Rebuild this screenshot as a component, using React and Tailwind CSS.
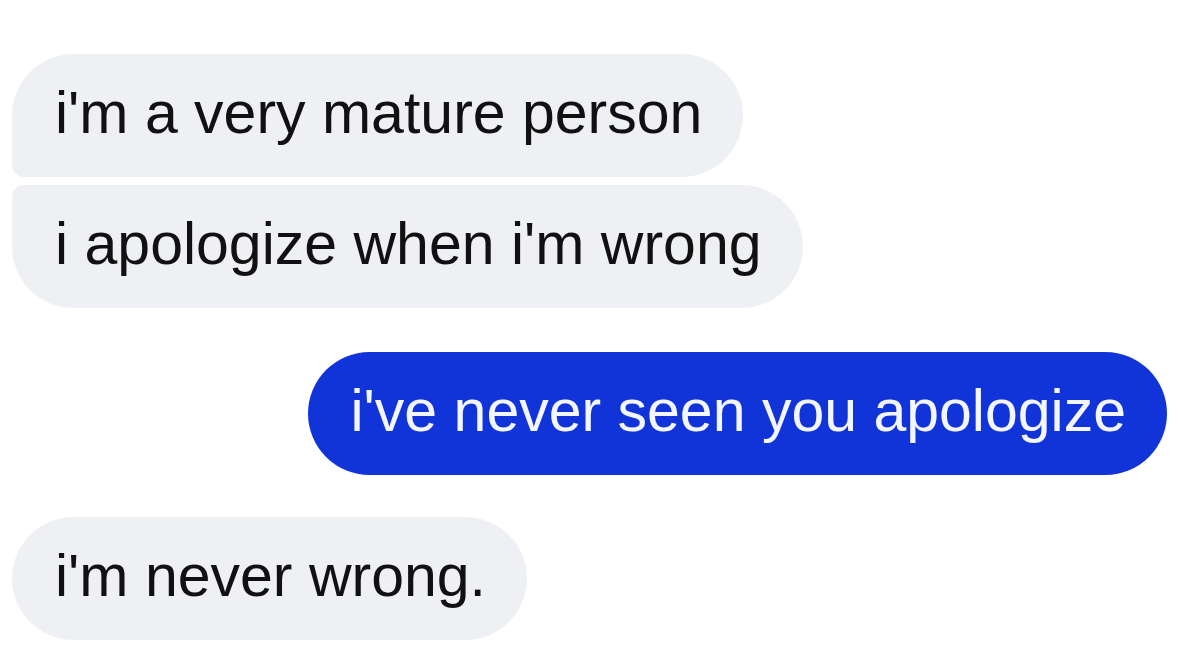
import React from "react";

const font = { fontFamily: '"Liberation Sans", Arial, sans-serif' };

const Bubble = ({ children, mine, className = "" }) => (
  <div
    className={`flex items-center h-[123px] pl-[43px] pr-[41px] text-[59px] leading-none ${
      mine ? "self-end bg-[#1134d9] text-[#f4f6ff]" : "self-start bg-[#eff0f4] text-[#111111]"
    } ${className}`}
  >
    <span className="-mt-[4px]">{children}</span>
  </div>
);

export default function App() {
  return (
    <div
      className="w-[1179px] h-[647px] bg-white flex flex-col px-[12px] pt-[54px] overflow-hidden"
      style={font}
    >
      {/* grouped incoming messages */}
      <Bubble className="rounded-tl-[62px] rounded-bl-[12px] rounded-r-[62px]">
        i'm a very mature person
      </Bubble>
      <Bubble className="mt-[8px] rounded-tl-[12px] rounded-bl-[62px] rounded-r-[62px]">
        i apologize when i'm wrong
      </Bubble>

      {/* outgoing */}
      <Bubble mine className="mt-[44px] rounded-[62px]">
        i've never seen you apologize
      </Bubble>

      <Bubble className="mt-[42px] rounded-[62px]">i'm never wrong.</Bubble>
    </div>
  );
}
